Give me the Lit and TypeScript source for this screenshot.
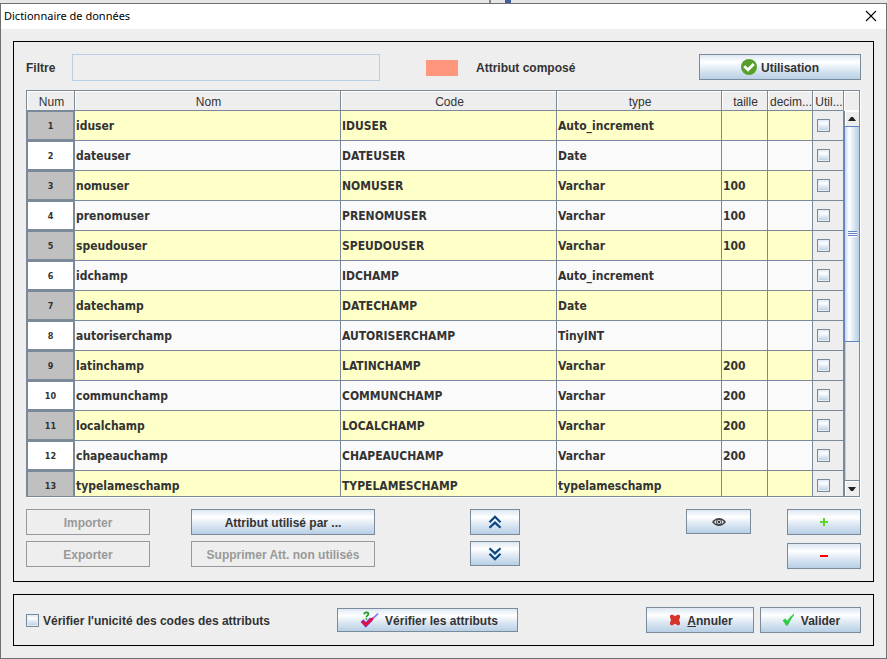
import { LitElement, html, css } from "lit";
import { customElement, state } from "lit/decorators.js";
import { classMap } from "lit/directives/class-map.js";

interface Attribut {
  nom: string;
  code: string;
  type: string;
  taille: string;
}

const make = (nom: string, type: string, taille = ""): Attribut => ({
  nom,
  code: nom.toUpperCase(),
  type,
  taille,
});

const ATTRIBUTS: Attribut[] = [
  make("iduser", "Auto_increment"),
  make("dateuser", "Date"),
  make("nomuser", "Varchar", "100"),
  make("prenomuser", "Varchar", "100"),
  make("speudouser", "Varchar", "100"),
  make("idchamp", "Auto_increment"),
  make("datechamp", "Date"),
  make("autoriserchamp", "TinyINT"),
  make("latinchamp", "Varchar", "200"),
  make("communchamp", "Varchar", "200"),
  make("localchamp", "Varchar", "200"),
  make("chapeauchamp", "Varchar", "200"),
  make("typelameschamp", "typelameschamp"),
];

const iconClose = html`<svg width="12" height="12" viewBox="0 0 12 12" aria-hidden="true">
  <path d="M1 1L11 11M11 1L1 11" stroke="#000" stroke-width="1.1" fill="none" />
</svg>`;

const iconOk = html`<svg width="16" height="16" viewBox="0 0 16 16" aria-hidden="true">
  <circle cx="8" cy="8" r="8" fill="#58a02c" />
  <path d="M3.2 7.2L7 10.8L12.8 5" stroke="#fff" stroke-width="2.8" fill="none" />
</svg>`;

const iconUp = html`<svg width="14" height="14" viewBox="0 0 14 14" aria-hidden="true">
  <path d="M1.5 7.2L7 1.8L12.5 7.2M1.5 12.7L7 7.6L12.5 12.7" stroke="#0a4682" stroke-width="2.2" fill="none" />
</svg>`;

const iconDown = html`<svg width="14" height="14" viewBox="0 0 14 14" aria-hidden="true">
  <path d="M1.5 1.3L7 6.4L12.5 1.3M1.5 6.8L7 12.2L12.5 6.8" stroke="#0a4682" stroke-width="2.2" fill="none" />
</svg>`;

const iconEye = html`<svg width="14" height="10" viewBox="0 0 14 10" aria-hidden="true">
  <path d="M0 5Q3 1 7 1Q11 1 14 5Q11 9 7 9Q3 9 0 5Z" fill="#444" />
  <path d="M2.2 5Q3 3.4 4.4 3Q3.6 5 4.4 7Q3 6.6 2.2 5ZM11.8 5Q11 3.4 9.6 3Q10.4 5 9.6 7Q11 6.6 11.8 5Z" fill="#dfe8f2" />
  <circle cx="7" cy="5" r="2.1" fill="#e9eff6" />
  <circle cx="7" cy="5" r="1.2" fill="#333" />
</svg>`;

const iconPlus = html`<svg width="8" height="8" viewBox="0 0 8 8" aria-hidden="true">
  <path d="M3 0H5V3H8V5H5V8H3V5H0V3H3Z" fill="#5cd62b" />
</svg>`;

const iconMinus = html`<svg width="8" height="8" viewBox="0 0 8 8" aria-hidden="true">
  <path d="M0 3H8V5H0Z" fill="#f00" />
</svg>`;

const iconVerify = html`<svg width="24" height="18" viewBox="0 0 24 18" aria-hidden="true">
  <path d="M11 12L21 2.6" stroke="#7f7fff" stroke-width="1.8" fill="none" />
  <path d="M5 9.6L8.8 13.8L14.4 8" stroke="#7a3fd0" stroke-width="4" fill="none" />
  <path d="M5.4 10L8.8 13.8L16 7" stroke="#ef0a2a" stroke-width="2.4" fill="none" />
  <path d="M7.2 3.4Q7.4 1.4 9.4 1.4Q11.4 1.4 11.4 3Q11.4 4 10.2 4.8Q9.4 5.3 9.4 6.2M9.4 7.2V8.8" stroke="#1e9a1e" stroke-width="1.7" fill="none" />
</svg>`;

const iconCross = html`<svg width="16" height="16" viewBox="0 0 16 16" aria-hidden="true">
  <path d="M3 3.4L5 2.4L8 4L11 2.4L13 3.4V5.6L12 8L13 10.4V12.6L11 13.4L8 11.8L5 13.4L3 12.6V10.4L4 8L3 5.6Z" fill="#d8352a" />
</svg>`;

const iconValid = html`<svg width="16" height="16" viewBox="0 0 16 16" aria-hidden="true">
  <path d="M1.6 8.6L4.2 6.6L6.2 8.8Q9 4.4 13 1.4V3Q9.6 7.6 6.8 13.4H4.8Q3.6 10.8 1.6 8.6Z" fill="#2ecc40" />
</svg>`;

@customElement("app-root")
export class AppRoot extends LitElement {
  @state() private filtre = "";

  static styles = css`
    :host {
      display: flex;
      flex-direction: column;
      box-sizing: border-box;
      height: 100vh;
      padding-right: 1px;
      background: #dcdcdc;
      color: #333;
      font: bold 12px/16px "Liberation Sans", Arial, sans-serif;
    }
    * {
      box-sizing: border-box;
    }
    svg {
      display: block;
      flex: none;
    }
    .behind {
      display: flex;
      justify-content: center;
      gap: 14px;
      height: 3px;
      flex: none;
      background: #e6e6e6;
      padding-left: 112px;
    }
    .behind .tick {
      width: 2px;
      background: #7a8a99;
    }
    .behind .mark {
      width: 6px;
      background: #3f5f9f;
    }
    .dialog {
      flex: 1;
      min-height: 0;
      display: flex;
      flex-direction: column;
      border: 1px solid #707070;
      background: #eee;
    }
    .titlebar {
      display: flex;
      align-items: center;
      justify-content: space-between;
      flex: none;
      height: 25px;
      padding: 0 9px 1px 3px;
      background: #fff;
    }
    h1 {
      margin: 0;
      color: #000;
      font: 11px/16px "Noto Sans", "Open Sans", sans-serif;
    }
    .close {
      padding: 0;
      border: 0;
      background: none;
    }
    .content {
      flex: 1;
      min-height: 0;
      display: flex;
      flex-direction: column;
      gap: 12px;
      padding: 12px;
    }
    .panel {
      padding: 12px;
      border: 1px solid #000;
    }
    .main {
      flex: 1;
      min-height: 0;
      display: flex;
      flex-direction: column;
    }
    .filter {
      display: flex;
      align-items: center;
      flex: none;
      margin-bottom: 9px;
    }
    .filter .btn {
      align-self: flex-start;
    }
    .filter input {
      width: 308px;
      height: 27px;
      margin-left: 16px;
      padding: 0 4px;
      border: 1px solid #b8cfe5;
      background: #eee;
      color: #333;
      font: inherit;
    }
    .filter label {
      width: 30px;
    }
    .legend {
      display: flex;
      align-items: center;
      gap: 18px;
      margin: 0 auto 0 46px;
    }
    .swatch {
      width: 32px;
      height: 16px;
      background: #ff967d;
    }
    .btn {
      display: flex;
      align-items: center;
      justify-content: center;
      gap: 4px;
      height: 26px;
      padding: 0 4px;
      border: 1px solid #7a8a99;
      border-radius: 0;
      background: linear-gradient(#dde8f3, #fff 30%, #dde8f3 60%, #b8cfe5);
      color: #333;
      font: inherit;
      white-space: nowrap;
    }
    .btn > span,
    .unique > span {
      padding-top: 2px;
    }
    .btn:disabled {
      border-color: #999;
      background: #eee;
      color: #999;
    }
    .w162 { width: 162px; }
    .w124 { width: 124px; }
    .w184 { width: 184px; }
    .w50 { width: 50px; }
    .w65 { width: 65px; }
    .w74 { width: 74px; }
    .w108 { width: 108px; }
    .w101 { width: 101px; }
    .w181 { width: 181px; height: 24px; }
    .short { height: 25px; }

    .grid {
      flex: 1;
      min-height: 0;
      display: flex;
      margin-right: 1px;
      border: 1px solid #7a8a99;
      box-shadow: 1px 1px 0 #fff;
    }
    .view {
      flex: 1;
      overflow-y: auto;
      scrollbar-width: none;
    }
    table {
      width: 100%;
      table-layout: fixed;
      border-collapse: separate;
      border-spacing: 0;
    }
    .c-num { width: 48px; }
    .c-code { width: 216px; }
    .c-type { width: 165px; }
    .c-taille { width: 46px; }
    .c-dec { width: 45px; }
    .c-util { width: 31px; }
    th {
      position: sticky;
      top: 0;
      z-index: 1;
      height: 20px;
      padding: 2px 0 0 2px;
      border-right: 1px solid #7a8a99;
      border-bottom: 1px solid #7a8a99;
      background: #eee;
      box-shadow: inset 1px 1px 0 #fff;
      font-weight: normal;
      font-size: 12px;
      line-height: 16px;
      white-space: nowrap;
    }
    td {
      height: 30px;
      padding: 0 1px;
      border-right: 1px solid #7a8a99;
      border-bottom: 1px solid #7a8a99;
      background: #fafafa;
      font: bold 12px/20px "DejaVu Sans Condensed", "Noto Sans", sans-serif;
      white-space: nowrap;
    }
    .odd td {
      background: #ffffc8;
    }
    td.num {
      background: #fff;
      box-shadow: inset 0 0 0 1px #7a8a99;
      font-size: 9px;
      text-align: center;
    }
    .odd td.num {
      background: #c0c0c0;
    }
    td.util,
    .odd td.util {
      padding-left: 4px;
      background: #eee;
    }
    .check {
      appearance: none;
      display: block;
      flex: none;
      width: 13px;
      height: 13px;
      margin: 0;
      border: 1px solid #7a8a99;
      background: linear-gradient(#dde8f3, #fff 30%, #dde8f3 60%, #b8cfe5);
      box-shadow: inset 0 0 0 1px #e4ecf5;
    }
    .scroll {
      display: flex;
      flex-direction: column;
      flex: none;
      width: 15px;
    }
    .corner {
      height: 20px;
      border-bottom: 1px solid #fff;
      box-shadow: inset 1px 1px 0 #fff;
    }
    .arrow {
      display: flex;
      align-items: center;
      justify-content: center;
      height: 15px;
      padding: 0;
      border: 0;
      border-left: 1px solid #7a8a99;
      background: #eee;
      box-shadow: inset 1px 1px 0 #fff;
    }
    .arrow.down {
      height: 16px;
      border-top: 1px solid #7a8a99;
    }
    .track {
      flex: 1;
      border-left: 1px solid #7a8a99;
      box-shadow: inset 1px 0 0 #b8cfe5;
    }
    .thumb {
      display: flex;
      align-items: center;
      justify-content: center;
      height: 61%;
      margin-left: -1px;
      border: 1px solid #6382bf;
      border-right: 0;
      background: linear-gradient(90deg, #c8daeb, #fff 30%, #dde8f3 60%, #b8cfe5);
    }
    .grip {
      width: 9px;
      height: 6px;
      background: repeating-linear-gradient(#6382bf 0 1px, #fff 1px 2px);
    }
    .actions {
      display: flex;
      align-items: flex-start;
      flex: none;
      margin-top: 12px;
    }
    .stack {
      display: flex;
      flex-direction: column;
      gap: 6px;
    }
    .stack.wide {
      gap: 8px;
    }
    .gap-a { flex: 41; }
    .gap-b { flex: 95; }
    .gap-c { flex: 166; }
    .gap-d { flex: 36; }
    .gap-e { flex: 67; }
    .gap-f { flex: 128; }

    .footer {
      display: flex;
      align-items: center;
      flex: none;
    }
    .unique {
      display: flex;
      align-items: center;
      gap: 4px;
    }
    .pair {
      display: flex;
      gap: 6px;
    }
    .key {
      text-decoration: underline;
    }
  `;

  private row(a: Attribut, i: number) {
    return html`<tr class=${classMap({ odd: i % 2 === 0 })}>
      <td class="num">${i + 1}</td>
      <td>${a.nom}</td>
      <td>${a.code}</td>
      <td>${a.type}</td>
      <td>${a.taille}</td>
      <td></td>
      <td class="util"><input class="check" type="checkbox" aria-label="Utilisé : ${a.nom}" /></td>
    </tr>`;
  }

  render() {
    const rows = ATTRIBUTS.filter((a) => a.nom.includes(this.filtre));
    return html`
      <div class="behind"><span class="tick"></span><span class="mark"></span></div>
      <div class="dialog">
        <header class="titlebar">
          <h1>Dictionnaire de données</h1>
          <button class="close" aria-label="Fermer">${iconClose}</button>
        </header>
        <div class="content">
          <section class="panel main">
            <div class="filter">
              <label for="filtre">Filtre</label>
              <input
                id="filtre"
                type="text"
                .value=${this.filtre}
                @input=${(e: Event) => (this.filtre = (e.target as HTMLInputElement).value)}
              />
              <div class="legend"><span class="swatch"></span><span>Attribut composé</span></div>
              <button class="btn w162">${iconOk}<span>Utilisation</span></button>
            </div>
            <div class="grid">
              <div class="view">
                <table>
                  <colgroup>
                    <col class="c-num" />
                    <col />
                    <col class="c-code" />
                    <col class="c-type" />
                    <col class="c-taille" />
                    <col class="c-dec" />
                    <col class="c-util" />
                  </colgroup>
                  <thead>
                    <tr>
                      <th>Num</th>
                      <th>Nom</th>
                      <th>Code</th>
                      <th>type</th>
                      <th>taille</th>
                      <th>decim...</th>
                      <th>Util...</th>
                    </tr>
                  </thead>
                  <tbody>
                    ${rows.map((a, i) => this.row(a, i))}
                  </tbody>
                </table>
              </div>
              <div class="scroll">
                <div class="corner"></div>
                <button class="arrow" aria-label="Monter">
                  <svg width="8" height="4" viewBox="0 0 8 4"><path d="M0 4L3 0H5L8 4Z" fill="#222" /></svg>
                </button>
                <div class="track">
                  <div class="thumb"><span class="grip"></span></div>
                </div>
                <button class="arrow down" aria-label="Descendre">
                  <svg width="8" height="4" viewBox="0 0 8 4"><path d="M0 0L3 4H5L8 0Z" fill="#222" /></svg>
                </button>
              </div>
            </div>
            <div class="actions">
              <div class="stack">
                <button class="btn w124" disabled><span>Importer</span></button>
                <button class="btn w124" disabled><span>Exporter</span></button>
              </div>
              <span class="gap-a"></span>
              <div class="stack">
                <button class="btn w184"><span>Attribut utilisé par ...</span></button>
                <button class="btn w184" disabled><span>Supprimer Att. non utilisés</span></button>
              </div>
              <span class="gap-b"></span>
              <div class="stack">
                <button class="btn w50" aria-label="Vers le haut">${iconUp}</button>
                <button class="btn w50 short" aria-label="Vers le bas">${iconDown}</button>
              </div>
              <span class="gap-c"></span>
              <button class="btn w65 short" aria-label="Afficher">${iconEye}</button>
              <span class="gap-d"></span>
              <div class="stack wide">
                <button class="btn w74" aria-label="Ajouter">${iconPlus}</button>
                <button class="btn w74" aria-label="Retirer">${iconMinus}</button>
              </div>
            </div>
          </section>
          <section class="panel footer">
            <label class="unique">
              <input class="check" type="checkbox" />
              <span>Vérifier l'unicité des codes des attributs</span>
            </label>
            <span class="gap-e"></span>
            <button class="btn w181">${iconVerify}<span>Vérifier les attributs</span></button>
            <span class="gap-f"></span>
            <div class="pair">
              <button class="btn w108">${iconCross}<span><span class="key">A</span>nnuler</span></button>
              <button class="btn w101">${iconValid}<span>Valider</span></button>
            </div>
          </section>
        </div>
      </div>
    `;
  }
}
